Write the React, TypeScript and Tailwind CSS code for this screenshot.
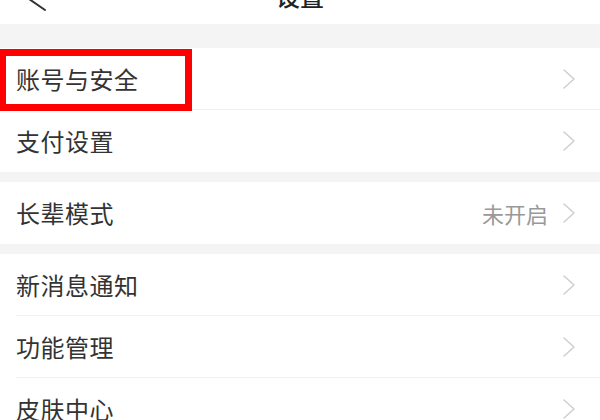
import React from 'react';

const font = '"Noto Sans CJK SC", "Noto Sans", sans-serif';

const Chevron = () => (
  <svg width="14" height="22" viewBox="0 0 14 22" fill="none" className="shrink-0">
    <polyline points="2,2 12,11 2,20" stroke="#cfcfcf" strokeWidth="1.6" strokeLinecap="round" strokeLinejoin="round" />
  </svg>
);

const Row = ({ label, value, last }: { label: string; value?: string; last?: boolean }) => (
  <div className="bg-white pl-4">
    <div className={`flex items-center h-[62px] pr-[24px] ${last ? '' : 'border-b border-[#f0f0f0]'}`}>
      <span className="flex-1 text-[24px] tracking-[0.5px] text-[#333333]">{label}</span>
      {value && <span className="mr-[14px] text-[22px] text-[#999999]">{value}</span>}
      <Chevron />
    </div>
  </div>
);

const Gap = ({ h }: { h: string }) => <div className={`bg-[#f4f4f4] ${h}`} />;

export default function App() {
  return (
    <div className="w-[600px] h-[420px] overflow-hidden bg-[#f4f4f4]" style={{ fontFamily: font }}>
      {/* Header, mostly scrolled off */}
      <div className="relative h-[24px] bg-white overflow-hidden">
        <div className="flex items-center justify-center h-[44px] -mt-[26px]">
          <span className="text-[24px] font-medium text-[#222222]">设置</span>
        </div>
        <svg className="absolute left-0 top-0" width="60" height="24" viewBox="0 0 60 24" fill="none">
          <polyline points="16,-10 45,10" stroke="#333333" strokeWidth="2" strokeLinecap="round" />
        </svg>
      </div>

      <Gap h="h-[24px]" />

      <div className="relative">
        <Row label="账号与安全" />
        <div className="absolute left-[-1px] top-[1px] w-[193px] h-[62px] border-[7px] border-[#ff0000]" />
      </div>
      <Row label="支付设置" last />

      <Gap h="h-[10px]" />

      <Row label="长辈模式" value="未开启" last />

      <Gap h="h-[10px]" />

      <Row label="新消息通知" />
      <Row label="功能管理" />
      <Row label="皮肤中心" last />
    </div>
  );
}
